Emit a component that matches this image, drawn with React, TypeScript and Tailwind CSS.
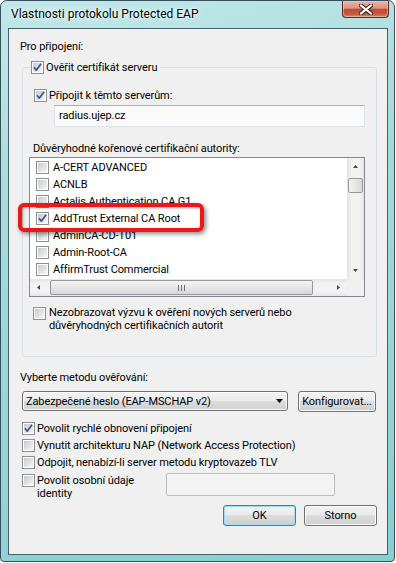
import type { ReactNode } from "react";

/** seznam certifikačních autorit v seznamu */
const certs = [
  { name: "A-CERT ADVANCED" },
  { name: "ACNLB" },
  { name: "Actalis Authentication CA G1" },
  { name: "AddTrust External CA Root", checked: true },
  { name: "AdminCA-CD-T01" },
  { name: "Admin-Root-CA" },
  { name: "AffirmTrust Commercial" },
];

/** zaškrtávací políčko ve stylu Windows 7 */
function Check({ checked = false }: { checked?: boolean }) {
  return (
    <span className="relative flex h-[13px] w-[13px] shrink-0 items-center justify-center border border-[#8e8f8f] bg-white">
      <span className="h-[9px] w-[9px] bg-linear-to-br from-[#c6cad0] to-[#f6f6f7]" />
      {checked && (
        <svg className="absolute left-[-1px] top-[-1px]" width="13" height="13" viewBox="0 0 13 13">
          <path d="M3 6.2 L5.3 9.2 L10 2.8" fill="none" stroke="#3a4f97" strokeWidth="1.7" strokeLinejoin="round" />
        </svg>
      )}
    </span>
  );
}

function CheckRow({ checked, children, className = "" }: { checked?: boolean; children: ReactNode; className?: string }) {
  return (
    <div className={`flex h-[13px] items-center gap-[2px] whitespace-nowrap ${className}`}>
      <Check checked={checked} />
      <span>{children}</span>
    </div>
  );
}

/** tlačítko ve stylu Aero */
function Button({ children, primary = false }: { children: ReactNode; primary?: boolean }) {
  return (
    <div
      className={`flex h-[21px] w-[73px] items-center justify-center rounded-[3px] border bg-[linear-gradient(#f2f2f2_0%,#ebebeb_50%,#dddddd_50%,#cfcfcf_100%)] ${
        primary ? "border-[#3c7fb1] shadow-[inset_0_0_0_1px_#9fdcf6]" : "border-[#707070] shadow-[inset_0_0_0_1px_#fbfbfb]"
      }`}
    >
      {children}
    </div>
  );
}

function Tri({ dir }: { dir: "up" | "down" | "left" | "right" }) {
  const d = {
    up: "M0 3 L2.5 0 L5 3 Z",
    down: "M0 0 L5 0 L2.5 3 Z",
    left: "M3 0 L3 5 L0 2.5 Z",
    right: "M0 0 L3 2.5 L0 5 Z",
  }[dir];
  const vertical = dir === "up" || dir === "down";
  return (
    <svg width={vertical ? 5 : 3} height={vertical ? 3 : 5} viewBox={vertical ? "0 0 5 3" : "0 0 3 5"}>
      <path d={d} fill="#4a4a4a" />
    </svg>
  );
}

export default function App() {
  return (
    <div className="h-[563px] w-[396px] bg-white font-[Roboto,sans-serif] text-[11px] leading-[13px] tracking-[-0.1px] text-black">
      <div className="flex h-[562px] w-[395px] flex-col rounded-t-[7px] rounded-b-[4px] border border-[#34505c] bg-[linear-gradient(165deg,#c2e8e9_0%,#a6dadb_35%,#98d4d5_70%,#86cfd1_100%)] pb-[6px] pl-[7px] pr-[6px]">
        {/* titulek okna */}
        <div className="flex h-[27px] shrink-0 items-start justify-between">
          <span className="ml-[3px] mt-[6px] text-[12px] leading-[14px] tracking-normal [text-shadow:0_0_7px_#ffffff,0_0_3px_#ffffff]">
            Vlastnosti protokolu Protected EAP
          </span>
          <div className="-mr-[1px] flex h-[17px] w-[47px] items-center justify-center rounded-b-[4px] border border-t-0 border-[#5b261c] bg-[linear-gradient(#eab2a5_0%,#d99483_45%,#c34a34_52%,#c65639_80%,#d98b6f_100%)] shadow-[inset_0_0_0_1px_rgba(255,220,210,0.45)]">
            <svg width="14" height="11" viewBox="0 0 14 11">
              <path d="M2 1.5 L12 9.5 M12 1.5 L2 9.5" stroke="#3d1c16" strokeWidth="4.2" strokeLinecap="square" />
              <path d="M2 1.5 L12 9.5 M12 1.5 L2 9.5" stroke="#ffffff" strokeWidth="2.2" strokeLinecap="square" />
            </svg>
          </div>
        </div>

        {/* klientská oblast */}
        <div className="flex flex-1 flex-col border border-[#46616d] bg-[#f0f0f0] pl-[11px] pr-[10px] pt-[11px]">
          <div>Pro připojení:</div>

          <fieldset className="ml-[2px] mt-[8px] w-[355px] rounded-[3px] border border-[#d5dfe5]">
            <legend className="ml-[7px] flex items-center gap-[2px] pl-[1px] pr-[3px]">
              <Check checked />
              <span className="whitespace-nowrap">Ověřit certifikát serveru</span>
            </legend>
            <div className="flex flex-col pb-[24px] pt-[15px]">
              <CheckRow checked className="ml-[11px]">
                Připojit k těmto serverům:
              </CheckRow>
              <div className="ml-[31px] mt-[3px] flex h-[22px] w-[311px] items-start border border-[#dde2e8] border-t-[#abadb3] bg-[#fafafa] pl-[4px] pt-[3px]">
                radius.ujep.cz
              </div>
              <div className="ml-[10px] mt-[15px] whitespace-nowrap">Důvěryhodné kořenové certifikační autority:</div>

              {/* seznam autorit */}
              <div className="relative ml-[6px] mt-[2px] h-[140px] w-[336px]">
                <div className="flex h-full w-full flex-col overflow-hidden border border-[#828790] bg-white">
                  <div className="flex h-[121px]">
                    <div className="flex-1 overflow-hidden pt-[1px]">
                      {certs.map((c) => (
                        <div key={c.name} className="flex h-[17px] items-center gap-[4px] whitespace-nowrap pl-[6px]">
                          <Check checked={c.checked} />
                          <span>{c.name}</span>
                        </div>
                      ))}
                    </div>
                    <div className="flex w-[17px] flex-col items-center bg-[linear-gradient(to_right,#e3e3e3,#f2f2f2_25%,#f2f2f2_75%,#e6e6e6)]">
                      <div className="flex h-[17px] w-full items-center justify-center">
                        <Tri dir="up" />
                      </div>
                      <div className="mt-[3px] h-[15px] w-[15px] rounded-[2px] border border-[#989898] bg-[linear-gradient(to_right,#f4f4f4,#e6e6e6_50%,#d6d6d6)]" />
                      <div className="flex-1" />
                      <div className="flex h-[17px] w-full items-center justify-center">
                        <Tri dir="down" />
                      </div>
                    </div>
                  </div>
                  <div className="flex h-[17px]">
                    <div className="flex flex-1 items-center bg-[linear-gradient(#e3e3e3,#f2f2f2_25%,#f2f2f2_75%,#e6e6e6)]">
                      <div className="flex h-full w-[17px] items-center justify-center">
                        <Tri dir="left" />
                      </div>
                      <div className="ml-[3px] flex h-[15px] w-[263px] items-center justify-center gap-[2px] rounded-[2px] border border-[#989898] bg-[linear-gradient(#f4f4f4,#e6e6e6_50%,#d6d6d6)]">
                        <span className="h-[6px] w-[1px] bg-[#6f6f6f]" />
                        <span className="h-[6px] w-[1px] bg-[#6f6f6f]" />
                        <span className="h-[6px] w-[1px] bg-[#6f6f6f]" />
                      </div>
                      <div className="flex-1" />
                      <div className="flex h-full w-[17px] items-center justify-center">
                        <Tri dir="right" />
                      </div>
                    </div>
                    <div className="w-[17px] bg-[#f0f0f0]" />
                  </div>
                </div>
                {/* červené zvýraznění */}
                <div className="absolute left-[-11px] top-[46px] h-[29px] w-[186px] rounded-[6px] border-[4px] border-[#ec1717] shadow-[2px_2px_4px_rgba(0,0,0,0.45),inset_1px_1px_3px_rgba(0,0,0,0.35)]" />
              </div>

              <div className="ml-[10px] mt-[9px] flex items-start gap-[3px]">
                <span className="mt-[1px]">
                  <Check />
                </span>
                <span>
                  Nezobrazovat výzvu k ověření nových serverů nebo
                  <br />
                  důvěryhodných certifikačních autorit
                </span>
              </div>
            </div>
          </fieldset>

          <div className="mt-[14px]">Vyberte metodu ověřování:</div>
          <div className="ml-[2px] mt-[7px] flex items-start gap-[10px]">
            <div className="flex h-[20px] w-[266px] items-center justify-between rounded-[3px] border border-[#707070] bg-[linear-gradient(#f2f2f2_0%,#ebebeb_50%,#dddddd_50%,#cfcfcf_100%)] pl-[3px] pr-[4px] shadow-[inset_0_0_0_1px_#fbfbfb]">
              <span className="whitespace-nowrap">Zabezpečené heslo (EAP-MSCHAP v2)</span>
              <svg width="7" height="4" viewBox="0 0 7 4">
                <path d="M0 0 L7 0 L3.5 4 Z" fill="#000" />
              </svg>
            </div>
            <div className="flex h-[21px] w-[78px] items-center justify-center whitespace-nowrap rounded-[3px] border border-[#707070] bg-[linear-gradient(#f2f2f2_0%,#ebebeb_50%,#dddddd_50%,#cfcfcf_100%)] shadow-[inset_0_0_0_1px_#fbfbfb]">
              Konfigurovat...
            </div>
          </div>

          <div className="ml-[2px] mt-[10px] flex flex-col">
            <CheckRow checked>Povolit rychlé obnovení připojení</CheckRow>
            <CheckRow className="mt-[4px]">Vynutit architekturu NAP (Network Access Protection)</CheckRow>
            <CheckRow className="mt-[4px]">Odpojit, nenabízí-li server metodu kryptovazeb TLV</CheckRow>
            <div className="mt-[5px] flex items-start">
              <div className="flex w-[144px] items-start gap-[2px]">
                <Check />
                <span>
                  Povolit osobní údaje
                  <br />
                  identity
                </span>
              </div>
              <div className="-mt-[1px] h-[23px] w-[169px] rounded-[2px] border border-[#b9bcc0] bg-[#f3f3f3]" />
            </div>
          </div>

          <div className="mt-[5px] flex justify-end gap-[8px]">
            <Button primary>OK</Button>
            <Button>Storno</Button>
          </div>
        </div>
      </div>
    </div>
  );
}
